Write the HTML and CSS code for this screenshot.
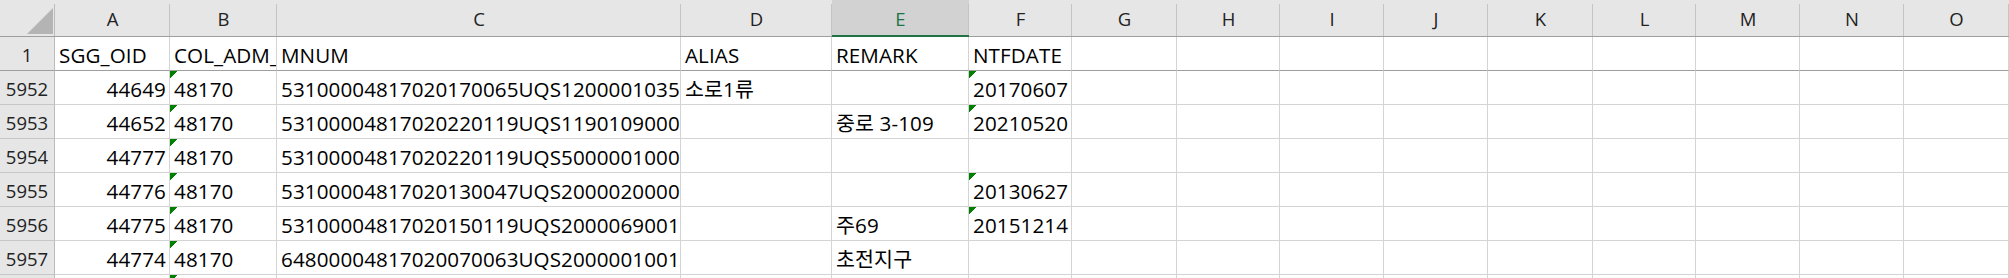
FILE: index.html
```html
<!DOCTYPE html>
<html lang="ko">
<head>
<meta charset="utf-8">
<title>Sheet</title>
<link rel="stylesheet" href="styles.css">
</head>
<body>
<div class="sheet">
  <div class="row head">
    <div class="c corner"><svg width="26" height="26" viewBox="0 0 26 26"><polygon points="26,0 26,26 0,26" fill="#b4b4b4"/></svg></div>
    <div class="c ch">A</div><div class="c ch">B</div><div class="c ch">C</div><div class="c ch">D</div><div class="c ch sel">E</div><div class="c ch">F</div><div class="c ch">G</div><div class="c ch">H</div><div class="c ch">I</div><div class="c ch">J</div><div class="c ch">K</div><div class="c ch">L</div><div class="c ch">M</div><div class="c ch">N</div><div class="c ch">O</div>
  </div>
  <div class="row r1">
    <div class="c rh">1</div>
    <div class="c">SGG_OID</div><div class="c">COL_ADM_CD</div><div class="c">MNUM</div><div class="c">ALIAS</div><div class="c">REMARK</div><div class="c">NTFDATE</div>
    <div class="c"></div><div class="c"></div><div class="c"></div><div class="c"></div><div class="c"></div><div class="c"></div><div class="c"></div><div class="c"></div><div class="c"></div>
  </div>
  <div class="row">
    <div class="c rh">5952</div>
    <div class="c num">44649</div><div class="c flag">48170</div><div class="c">53100004817020170065UQS12000010355</div><div class="c">소로1류</div><div class="c"></div><div class="c flag">20170607</div>
    <div class="c"></div><div class="c"></div><div class="c"></div><div class="c"></div><div class="c"></div><div class="c"></div><div class="c"></div><div class="c"></div><div class="c"></div>
  </div>
  <div class="row">
    <div class="c rh">5953</div>
    <div class="c num">44652</div><div class="c flag">48170</div><div class="c">53100004817020220119UQS11901090000</div><div class="c"></div><div class="c">중로 3-109</div><div class="c flag">20210520</div>
    <div class="c"></div><div class="c"></div><div class="c"></div><div class="c"></div><div class="c"></div><div class="c"></div><div class="c"></div><div class="c"></div><div class="c"></div>
  </div>
  <div class="row">
    <div class="c rh">5954</div>
    <div class="c num">44777</div><div class="c flag">48170</div><div class="c">53100004817020220119UQS50000010000</div><div class="c"></div><div class="c"></div><div class="c"></div>
    <div class="c"></div><div class="c"></div><div class="c"></div><div class="c"></div><div class="c"></div><div class="c"></div><div class="c"></div><div class="c"></div><div class="c"></div>
  </div>
  <div class="row">
    <div class="c rh">5955</div>
    <div class="c num">44776</div><div class="c flag">48170</div><div class="c">53100004817020130047UQS20000200000</div><div class="c"></div><div class="c"></div><div class="c flag">20130627</div>
    <div class="c"></div><div class="c"></div><div class="c"></div><div class="c"></div><div class="c"></div><div class="c"></div><div class="c"></div><div class="c"></div><div class="c"></div>
  </div>
  <div class="row">
    <div class="c rh">5956</div>
    <div class="c num">44775</div><div class="c flag">48170</div><div class="c">53100004817020150119UQS20000690011</div><div class="c"></div><div class="c">주69</div><div class="c flag">20151214</div>
    <div class="c"></div><div class="c"></div><div class="c"></div><div class="c"></div><div class="c"></div><div class="c"></div><div class="c"></div><div class="c"></div><div class="c"></div>
  </div>
  <div class="row">
    <div class="c rh">5957</div>
    <div class="c num">44774</div><div class="c flag">48170</div><div class="c">64800004817020070063UQS20000010011</div><div class="c"></div><div class="c">초전지구</div><div class="c"></div>
    <div class="c"></div><div class="c"></div><div class="c"></div><div class="c"></div><div class="c"></div><div class="c"></div><div class="c"></div><div class="c"></div><div class="c"></div>
  </div>
  <div class="row">
    <div class="c rh">5958</div>
    <div class="c num">44773</div><div class="c flag">48170</div><div class="c">64800004817020070063UQS20000010021</div><div class="c"></div><div class="c"></div><div class="c"></div>
    <div class="c"></div><div class="c"></div><div class="c"></div><div class="c"></div><div class="c"></div><div class="c"></div><div class="c"></div><div class="c"></div><div class="c"></div>
  </div>
</div>
</body>
</html>
```

FILE: styles.css
```css
* { box-sizing: border-box; }
html, body { margin: 0; padding: 0; }
body {
  width: 2009px;
  height: 278px;
  overflow: hidden;
  background: #ffffff;
  color: #000000;
  font-family: "Open Sans", "Noto Sans CJK KR", sans-serif;
}
.sheet { display: flex; flex-direction: column; }
.row {
  display: grid;
  grid-template-columns: 55px 115px 107px 404px 151px 137px 103px 105px 103px 104px 104px 105px 103px 104px 104px 105px;
  height: 34px;
  flex: none;
}
.row.head { height: 37px; }
.c {
  display: flex;
  align-items: flex-end;
  border-right: 1px solid #d4d4d4;
  border-bottom: 1px solid #d4d4d4;
  padding: 0 3px 5px 4px;
  font-size: 20.6px;
  line-height: 20px;
  letter-spacing: 0.1px;
  white-space: nowrap;
  overflow: hidden;
}
.num { justify-content: flex-end; }
.flag {
  background: linear-gradient(135deg, #008000 0 50%, transparent 50%) no-repeat 0 0 / 8px 8px;
}
.r1 .c { border-bottom-color: #9e9e9e; }
.rh {
  background: #e6e6e6;
  border-right-color: #bcbcbc;
  border-bottom-color: #c6c6c6;
  justify-content: center;
  padding: 0 0 5px 0;
  font-size: 18.5px;
  letter-spacing: 0;
  color: #222222;
}
.r1 .rh { border-bottom-color: #9e9e9e; }
.ch {
  background: linear-gradient(#c4c4c4, #c4c4c4) no-repeat right bottom / 1px calc(100% - 4px), #e6e6e6;
  border-right: 0;
  border-bottom-color: #9e9e9e;
  justify-content: center;
  padding: 0 0 7px 0;
  font-size: 18.5px;
  letter-spacing: 0;
  color: #222222;
}
.ch.sel {
  background: linear-gradient(#c4c4c4, #c4c4c4) no-repeat right bottom / 1px calc(100% - 4px), #d2d2d2;
  border-bottom: 2px solid #217346;
  padding-bottom: 6px;
  color: #217346;
}
.corner {
  background: linear-gradient(#bcbcbc, #bcbcbc) no-repeat right bottom / 1px calc(100% - 4px), #e6e6e6;
  border-right: 0;
  border-bottom-color: #9e9e9e;
  justify-content: flex-end;
  padding: 0 2px 2px 0;
}
.corner svg { display: block; }
```
